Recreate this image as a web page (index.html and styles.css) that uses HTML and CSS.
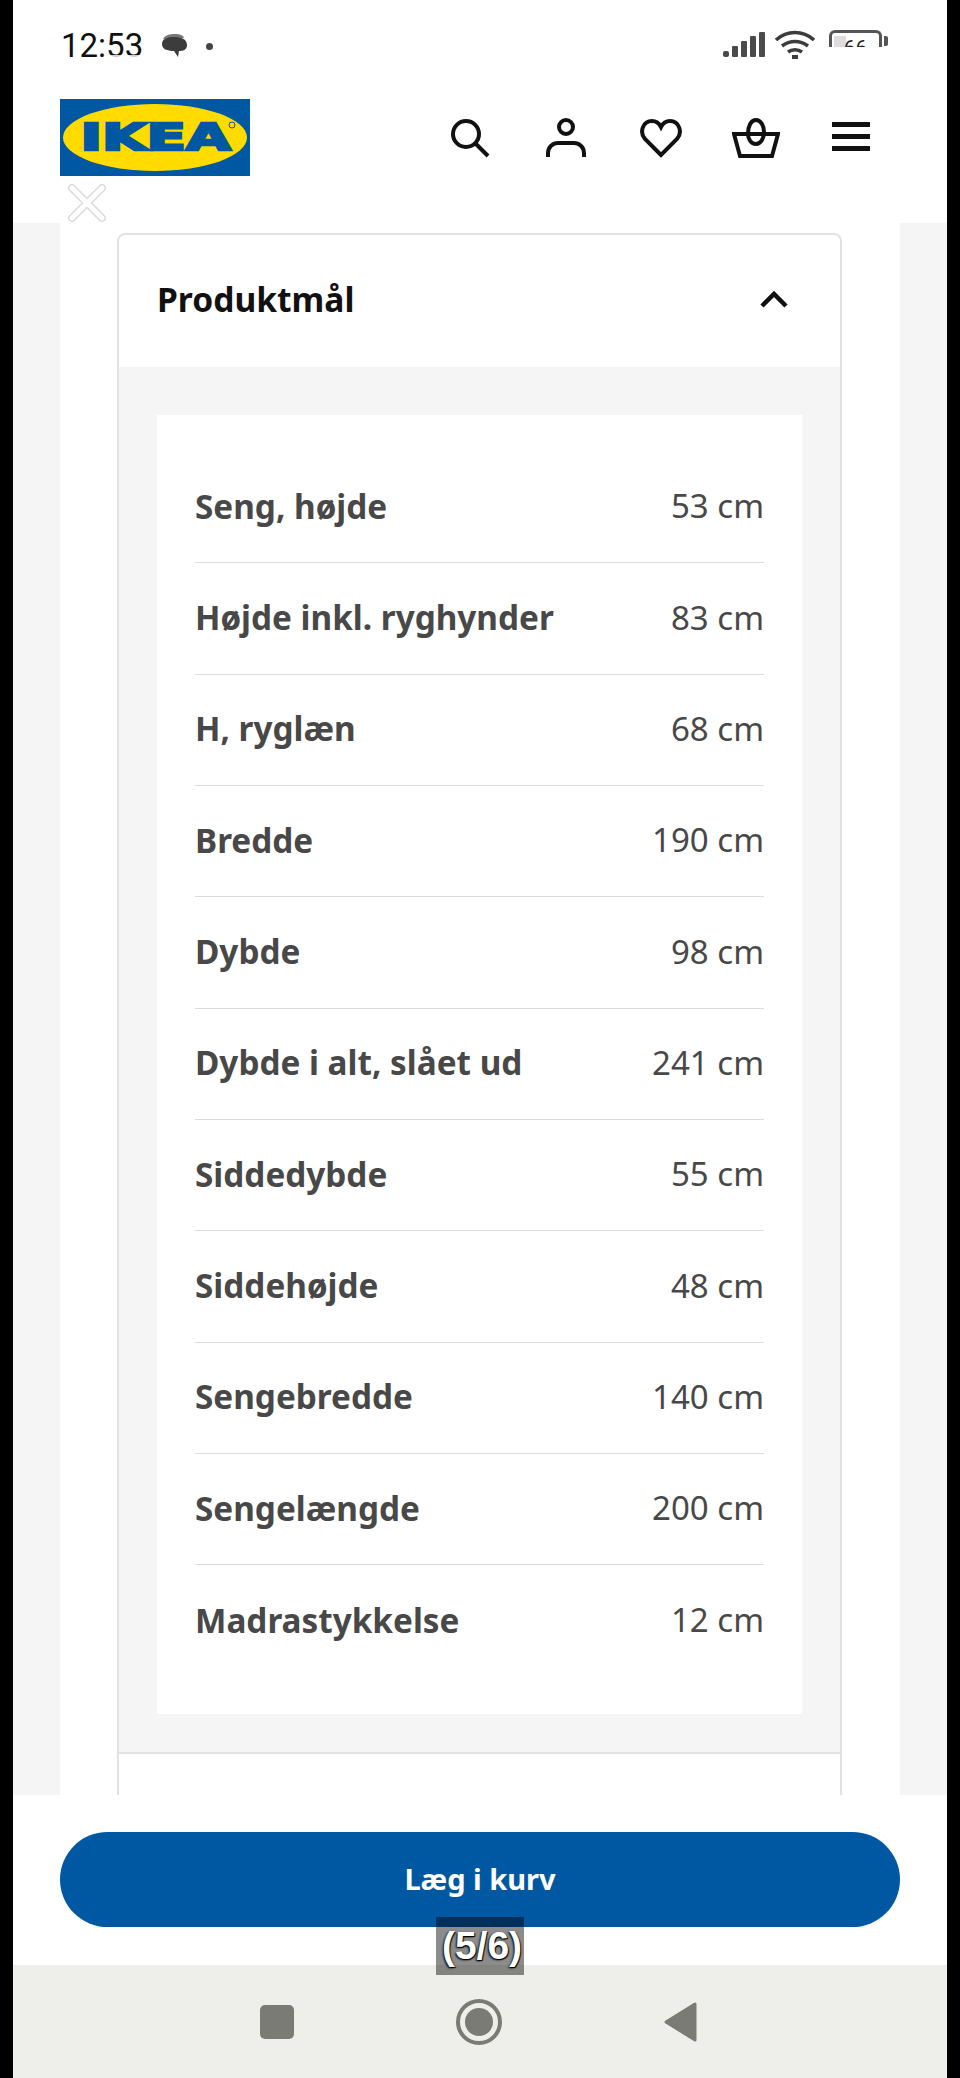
FILE: index.html
```html
<!DOCTYPE html>
<html lang="da">
<head>
    <meta charset="UTF-8">
    <meta name="viewport" content="width=device-width, initial-scale=1.0">
    <title>IKEA - Produktmål</title>
    <link rel="stylesheet" href="styles.css">
</head>
<body>
    <div class="phone">
        <!-- Status bar -->
        <div class="status-bar">
            <div class="status-left">
                <span class="clock">12:53<span class="clock-smear"></span></span>
                <svg width="27" height="28" viewBox="0 0 27 28">
                    <path d="M2 7c2-4 7-5 12-5s8 1 9 4z" fill="#777"/>
                    <path d="M1 12c0-5 5-7 12-7s13 2 13 8c0 5-4 6-8 6l-1 6-4-6c-7 0-12-2-12-7z" fill="#3c3c3c"/>
                </svg>
                <span class="status-dot"></span>
            </div>
            <div class="status-right">
                <svg width="42" height="28" viewBox="0 0 42 28">
                    <g fill="#4a4a4a">
                        <rect x="0" y="21" width="6" height="6" rx="2"/>
                        <rect x="9" y="16" width="6" height="11" rx="1"/>
                        <rect x="18" y="11" width="6" height="16" rx="1"/>
                        <rect x="27" y="6" width="6" height="21" rx="1"/>
                        <rect x="36" y="2" width="6" height="25" rx="1"/>
                    </g>
                </svg>
                <svg width="40" height="30" viewBox="0 0 40 30" fill="none" stroke="#3c3c3c" stroke-width="3.500">
                    <path d="M1 10c11-10 27-10 38 0"/>
                    <path d="M7 16c8-6 18-6 26 0"/>
                    <path d="M13 22c4-3 10-3 14 0"/>
                    <path d="M17 27h6" stroke-width="4"/>
                </svg>
                <div class="battery">
                    <div class="battery-body">
                        <span class="battery-fill"></span>
                        <span class="battery-num">66</span>
                        <span class="battery-smear"></span>
                    </div>
                    <span class="battery-tip"></span>
                </div>
            </div>
        </div>

        <!-- Site header -->
        <header class="site-header">
            <svg class="logo" width="190" height="77" viewBox="0 0 190 77">
                <rect width="190" height="77" fill="#0058a3"/>
                <ellipse cx="95" cy="38.500" rx="92" ry="33.500" fill="#ffdb00"/>
                <text x="20.500" y="51" textLength="150" lengthAdjust="spacingAndGlyphs" class="logo-text">IKEA</text>
                <circle cx="172" cy="26" r="3" fill="none" stroke="#0058a3" stroke-width="1"/>
            </svg>
            <nav class="header-icons">
                <svg width="40" height="40" viewBox="0 0 40 40" fill="none" stroke="#111" stroke-width="4">
                    <circle cx="15" cy="16" r="13"/>
                    <path d="M24 25l13 13"/>
                </svg>
                <svg width="40" height="40" viewBox="0 0 40 40" fill="none" stroke="#111" stroke-width="4">
                    <circle cx="20" cy="9" r="7"/>
                    <path d="M2 39v-4c0-6 5-10 10-10h16c5 0 10 4 10 10v4"/>
                </svg>
                <svg width="42" height="40" viewBox="0 0 42 40" fill="none" stroke="#111" stroke-width="4">
                    <path d="M21 37L5 21C-1 14 3 3 12 3c4 0 7 2 9 6 2-4 5-6 9-6 9 0 13 11 7 18z"/>
                </svg>
                <svg width="48" height="40" viewBox="0 0 48 40" fill="none" stroke="#111" stroke-width="4">
                    <path d="M2 16h44l-6 22H8z"/>
                    <path d="M16 16c0-8 3-14 8-14s8 6 8 12-3 12-8 12-8-5-8-10z"/>
                </svg>
                <svg width="40" height="40" viewBox="0 0 40 40" fill="#111">
                    <rect x="1" y="4" width="38" height="5"/>
                    <rect x="1" y="16" width="38" height="5"/>
                    <rect x="1" y="28" width="38" height="5"/>
                </svg>
            </nav>
            <svg class="close-x" width="42" height="42" viewBox="0 0 42 42">
                <path d="M6 6l30 30M36 6L6 36" stroke="#dcdcdc" stroke-width="8" stroke-linecap="round"/>
                <path d="M6 6l30 30M36 6L6 36" stroke="#fff" stroke-width="5" stroke-linecap="round"/>
            </svg>
        </header>

        <!-- Product dimensions -->
        <main class="content">
            <div class="content-inner">
                <section class="card">
                    <div class="card-head">
                        <h2>Produktmål</h2>
                        <svg width="30" height="18" viewBox="0 0 30 18" fill="none" stroke="#111" stroke-width="4.500">
                            <path d="M3 16L15 4l12 12"/>
                        </svg>
                    </div>
                    <div class="card-body">
                        <div class="dims">
                            <div class="dim-row"><span class="dim-name">Seng, højde</span><span class="dim-value">53 cm</span></div>
                            <div class="dim-row"><span class="dim-name">Højde inkl. ryghynder</span><span class="dim-value">83 cm</span></div>
                            <div class="dim-row"><span class="dim-name">H, ryglæn</span><span class="dim-value">68 cm</span></div>
                            <div class="dim-row"><span class="dim-name">Bredde</span><span class="dim-value">190 cm</span></div>
                            <div class="dim-row"><span class="dim-name">Dybde</span><span class="dim-value">98 cm</span></div>
                            <div class="dim-row"><span class="dim-name">Dybde i alt, slået ud</span><span class="dim-value">241 cm</span></div>
                            <div class="dim-row"><span class="dim-name">Siddedybde</span><span class="dim-value">55 cm</span></div>
                            <div class="dim-row"><span class="dim-name">Siddehøjde</span><span class="dim-value">48 cm</span></div>
                            <div class="dim-row"><span class="dim-name">Sengebredde</span><span class="dim-value">140 cm</span></div>
                            <div class="dim-row"><span class="dim-name">Sengelængde</span><span class="dim-value">200 cm</span></div>
                            <div class="dim-row"><span class="dim-name">Madrastykkelse</span><span class="dim-value">12 cm</span></div>
                        </div>
                    </div>
                </section>
            </div>
        </main>

        <!-- Add to basket -->
        <div class="buy-bar">
            <button class="buy-btn">Læg i kurv</button>
        </div>

        <!-- Android nav -->
        <div class="nav-bar">
            <span class="nav-square"></span>
            <span class="nav-circle"><span class="nav-circle-dot"></span></span>
            <svg width="33" height="40" viewBox="0 0 33 40"><path d="M2 20L31 2v36z" fill="#7b7b76" stroke="#7b7b76" stroke-width="3" stroke-linejoin="round"/></svg>
        </div>

        <div class="caption">(5/6)</div>
    </div>
</body>
</html>
```

FILE: styles.css
```css
* {
    box-sizing: border-box;
}

html, body {
    margin: 0;
    height: 100%;
}

body {
    background: #000;
    font-family: 'Noto Sans', 'Open Sans', sans-serif;
}

.phone {
    position: relative;
    width: 934px;
    height: 2078px;
    margin-left: 13px;
    display: flex;
    flex-direction: column;
    background: #fff;
    overflow: hidden;
}

.status-bar {
    height: 99px;
    flex: none;
    padding: 30px 59px 0 48px;
    display: flex;
    justify-content: space-between;
    align-items: flex-start;
}

.status-left {
    display: flex;
    align-items: center;
    gap: 18px;
}

.clock {
    position: relative;
    font-family: Roboto, sans-serif;
    font-size: 33px;
    line-height: 32px;
    color: #111;
}

/* the lower edge of the last digits is smeared in the capture */
.clock-smear {
    position: absolute;
    right: -2px;
    bottom: 2px;
    width: 36px;
    height: 5px;
    background: rgba(255, 255, 255, 0.8);
}

.status-dot {
    width: 7px;
    height: 7px;
    border-radius: 50%;
    background: #444;
}

.status-right {
    display: flex;
    align-items: flex-start;
    gap: 10px;
}

.battery {
    display: flex;
    align-items: center;
    gap: 2px;
    margin-left: 4px;
}

.battery-body {
    position: relative;
    width: 53px;
    height: 22px;
    border: 3px solid #555;
    border-bottom: none;
    border-radius: 6px 6px 0 0;
    text-align: center;
}

.battery-fill {
    position: absolute;
    left: 2px;
    top: 3px;
    width: 12px;
    height: 12px;
    background: #ddd;
}

.battery-num {
    position: relative;
    display: block;
    font-family: Roboto, sans-serif;
    font-size: 21px;
    line-height: 31px;
    color: #222;
}

.battery-smear {
    position: absolute;
    left: -4px;
    right: -4px;
    top: 14px;
    height: 16px;
    background: #fff;
}

.battery-tip {
    width: 4px;
    height: 10px;
    background: #555;
    border-radius: 0 2px 2px 0;
}

.site-header {
    position: relative;
    height: 124px;
    flex: none;
    padding: 0 49px 47px 47px;
    display: flex;
    justify-content: space-between;
    align-items: flex-start;
}

.logo {
    display: block;
}

.logo-text {
    font-family: 'DejaVu Sans', sans-serif;
    font-weight: 700;
    font-size: 37px;
    fill: #0058a3;
    stroke: #0058a3;
    stroke-width: 2.500px;
}

.header-icons {
    display: grid;
    grid-template-columns: repeat(5, 95px);
    justify-items: center;
    padding-top: 19px;
}

.close-x {
    position: absolute;
    left: 53px;
    top: 83px;
}

.content {
    height: 1572px;
    flex: none;
    padding: 0 47px;
    background: #f5f5f5;
    overflow: hidden;
}

.content-inner {
    height: 100%;
    padding: 10px 58px 0 57px;
    background: #fff;
}

.card {
    border: 2px solid #e2e2e2;
    border-radius: 8px 8px 0 0;
    height: 1700px;
}

.card-head {
    height: 132px;
    padding: 0 51px 4px 38px;
    display: flex;
    justify-content: space-between;
    align-items: center;
}

.card-head h2 {
    margin: 0;
    font-size: 33.600px;
    font-weight: 700;
    color: #111;
}

.card-body {
    padding: 48px 38px 38px;
    background: #f5f5f5;
    border-bottom: 2px solid #e2e2e2;
}

.dims {
    padding: 37px 38px;
    background: #fff;
}

.dim-row {
    height: 111.350px;
    padding-bottom: 3px;
    display: flex;
    justify-content: space-between;
    align-items: center;
    border-bottom: 1px solid #dcdcdc;
    font-size: 33px;
    color: #484848;
}

.dim-row:last-child {
    border-bottom: none;
}

.dim-name {
    font-size: 33.300px;
    font-weight: 700;
}

.buy-bar {
    height: 170px;
    flex: none;
    padding: 37px 47px 0;
    background: #fff;
}

.buy-btn {
    display: block;
    width: 840px;
    height: 95px;
    border: none;
    border-radius: 48px;
    background: #0058a3;
    color: #fff;
    font-family: inherit;
    font-size: 29px;
    font-weight: 700;
    padding-bottom: 4px;
}

.nav-bar {
    flex: 1;
    padding-left: 247px;
    display: flex;
    align-items: center;
    gap: 162px;
    background: #eeeeea;
}

.nav-square {
    width: 34px;
    height: 34px;
    border-radius: 5px;
    background: #7b7b76;
}

.nav-circle {
    width: 46px;
    height: 46px;
    border-radius: 50%;
    border: 4px solid #7b7b76;
    display: flex;
    align-items: center;
    justify-content: center;
}

.nav-circle-dot {
    width: 28px;
    height: 28px;
    border-radius: 50%;
    background: #7b7b76;
}

.caption {
    position: absolute;
    left: 423px;
    top: 1917px;
    width: 88px;
    height: 58px;
    padding: 2px 0 0 4px;
    background: rgba(0, 0, 0, 0.45);
    color: #fff;
    font-family: 'Liberation Sans', Arial, sans-serif;
    font-size: 39px;
    font-weight: 700;
    line-height: 54px;
    text-align: center;
    white-space: nowrap;
    text-shadow: -1px 1px 2px #000, 1px 1px 1px #000;
}
```
